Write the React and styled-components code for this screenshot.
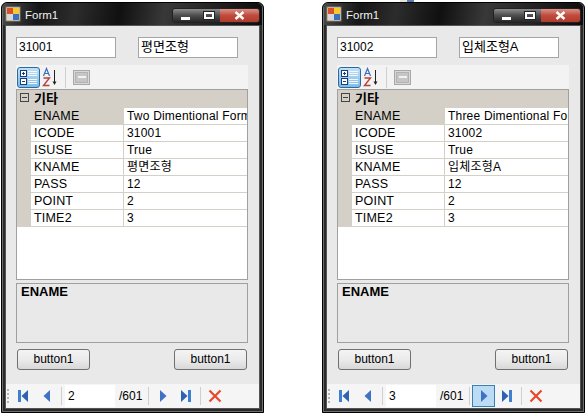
import React from "react";
import styled, { createGlobalStyle } from "styled-components";

const GlobalStyle = createGlobalStyle`
  html, body {
    margin: 0;
    background: #ffffff;
    font-family: "Liberation Sans", "Noto Sans CJK KR", sans-serif;
  }
`;

const forms = [
  {
    code: "31001",
    kname: "평면조형",
    ename: "Two Dimentional Form",
    page: "2",
    nextActive: false,
  },
  {
    code: "31002",
    kname: "입체조형A",
    ename: "Three Dimentional Form",
    page: "3",
    nextActive: true,
  },
];

const FormIcon = () => (
  <svg width="16" height="16" viewBox="0 0 16 16">
    <rect x="1" y="1" width="14" height="14" fill="#f4f0e0" stroke="#8a7f60" />
    <rect x="2" y="2" width="6" height="6" fill="#d8502c" />
    <rect x="8" y="2" width="6" height="6" fill="#f6c92e" />
    <rect x="2" y="8" width="6" height="6" fill="#d8d8d8" />
    <rect x="8" y="8" width="6" height="6" fill="#3b6fc4" />
  </svg>
);

const CategorizedIcon = () => (
  <svg width="21" height="19" viewBox="0 0 21 19">
    <rect x="2.5" y="2.5" width="6" height="6" fill="#fff" stroke="#1a3f78" />
    <path d="M4 5.5h3M5.5 4v3" stroke="#1a3f78" />
    <rect x="2.5" y="10.5" width="6" height="6" fill="#fff" stroke="#1a3f78" />
    <path d="M4 13.5h3" stroke="#1a3f78" />
    <path d="M10 3.5h9M10 5.5h9M10 7.5h9M10 11.5h9M10 13.5h9M10 15.5h9" stroke="#f4f8fc" />
  </svg>
);

const SortIcon = () => (
  <svg width="20" height="20" viewBox="0 0 20 20">
    <path d="M1.5 9 4.5 1.5 7.5 9M2.6 6.5h3.8" fill="none" stroke="#3a6cc0" strokeWidth="1.2" />
    <path d="M1.5 11h6L1.5 18.5h6" fill="none" stroke="#b5423a" strokeWidth="1.4" />
    <path d="M12.5 3v13" stroke="#222" />
    <path d="M10.5 14.5h4L12.5 18z" fill="#222" />
  </svg>
);

const PagesIcon = () => (
  <svg width="17" height="15" viewBox="0 0 17 15">
    <rect x="0.5" y="0.5" width="16" height="14" fill="#d8d8d8" stroke="#a8a8a8" />
    <rect x="2.5" y="2.5" width="12" height="10" fill="#c6c6c6" stroke="#b2b2b2" />
    <path d="M5 7h8" stroke="#f2f2f2" strokeWidth="2" />
  </svg>
);

const NavIcon = ({ kind }) => {
  const paths = {
    first: (
      <>
        <rect x="2" y="2" width="3" height="12" fill="#3f7fd0" />
        <path d="M12 2v12L5.5 8z" fill="#2f62b0" />
      </>
    ),
    prev: <path d="M11 2v12L4.5 8z" fill="#3f72c4" />,
    next: <path d="M5 2v12l6.5-6z" fill="#3f72c4" />,
    last: (
      <>
        <path d="M3 2v12l6.5-6z" fill="#2f62b0" />
        <rect x="10" y="2" width="3" height="12" fill="#3f7fd0" />
      </>
    ),
    del: <path d="M2.5 2.5 13.5 13.5M13.5 2.5 2.5 13.5" stroke="#e8482c" strokeWidth="2.2" />,
  };
  return (
    <svg width="16" height="16" viewBox="0 0 16 16">
      {paths[kind]}
    </svg>
  );
};

const Page = styled.div`
  display: flex;
  gap: 58px;
  padding: 2px 0 0 1px;
  width: 588px;
  height: 418px;
  box-sizing: border-box;
  overflow: hidden;
  position: relative;
`;

const Stray = styled.div`
  position: absolute;
  top: 0;
  left: 400px;
  width: 14px;
  height: 2px;
  background: linear-gradient(90deg, #e8e4d8 0 50%, #5b7fb8 50%);
`;

const Window = styled.div`
  width: 263px;
  height: 411px;
  box-sizing: border-box;
  border: 1px solid #000;
  border-radius: 6px 6px 0 0;
  background: #2a2a2a;
  display: flex;
  flex-direction: column;
  padding: 0 3px 3px;
  box-shadow: inset 0 0 0 1px #6e6e6e;
`;

const TitleBar = styled.div`
  height: 22px;
  flex: none;
  display: flex;
  align-items: center;
  gap: 4px;
  padding-left: 2px;
  margin: 0 -2px;
  border-radius: 5px 5px 0 0;
  background: linear-gradient(100deg, #4a4a4a 0%, #161616 14%, #2c2c2c 28%, #101010 45%, #383838 62%, #0c0c0c 100%);
`;

const TitleText = styled.span`
  flex: 1;
  color: #f0f0f0;
  font-size: 11.5px;
  padding-top: 1px;
`;

const Controls = styled.div`
  display: flex;
  height: 13px;
  margin-right: 2px;
  margin-top: 3px;
  border: 1px solid #222;
  border-radius: 3px;
  overflow: hidden;
`;

const Control = styled.div`
  width: ${(p) => p.$w}px;
  display: flex;
  align-items: center;
  justify-content: center;
  background: ${(p) =>
    p.$close
      ? "linear-gradient(#dd9086, #bf4b3c 50%, #b23a2c)"
      : "linear-gradient(#8c8c8c, #4d4d4d 50%, #262626)"};
`;

const MinGlyph = styled.div`
  width: 9px;
  height: 3px;
  margin-top: 5px;
  background: #fff;
`;

const MaxGlyph = styled.div`
  width: 6px;
  height: 3px;
  border: 2px solid #fff;
  box-shadow: 0 0 0 1px #222;
`;

const CloseGlyph = () => (
  <svg width="11" height="9" viewBox="0 0 11 9">
    <path d="M1.5 1 9.5 8M9.5 1 1.5 8" stroke="#fff" strokeWidth="2.4" />
  </svg>
);

const Client = styled.div`
  flex: 1;
  display: flex;
  flex-direction: column;
  background: #e9e9e9;
  border: 1px solid #555;
  padding-top: 11px;
  min-height: 0;
`;

const FieldRow = styled.div`
  display: flex;
  gap: 22px;
  padding-left: 10px;
`;

const Field = styled.div`
  width: 100px;
  height: 21px;
  box-sizing: border-box;
  border: 1px solid #a5a5a5;
  background: #fff;
  font-size: ${(p) => (p.$hangul ? "13px" : "12px")};
  line-height: 18px;
  padding-left: 2px;
  color: #000;
  white-space: nowrap;
`;

const PropTools = styled.div`
  display: flex;
  align-items: center;
  height: 24px;
  margin: 7px 11px 0 10px;
  background: #f3f3f3;
  padding-left: 1px;
`;

const ToolButton = styled.div`
  width: 23px;
  height: 21px;
  display: flex;
  align-items: center;
  justify-content: center;
  border-radius: 3px;
  ${(p) =>
    p.$active &&
    `border: 1px solid #2d6a9c;
     background: linear-gradient(#bfe0f7, #7fbce8);
     box-sizing: border-box;`}
`;

const ToolSep = styled.div`
  width: 1px;
  height: 21px;
  margin: 0 4px 0 2px;
  background: #cfcfcf;
`;

const Grid = styled.div`
  height: 191px;
  box-sizing: border-box;
  margin: 0 11px 0 10px;
  border: 1px solid #a0a0a0;
  background: #fff;
  font-size: 12px;
`;

const GroupRow = styled.div`
  height: 18px;
  box-sizing: border-box;
  padding: 0 0 3px 3px;
  display: flex;
  align-items: center;
  gap: 5px;
  background: #d4d0c8;
  font-weight: 700;
  font-size: 13px;
`;

const Expander = styled.div`
  width: 9px;
  height: 9px;
  box-sizing: border-box;
  border: 1px solid #444;
  position: relative;
  &::after {
    content: "";
    position: absolute;
    left: 1px;
    right: 1px;
    top: 3px;
    height: 1px;
    background: #444;
  }
`;

const Row = styled.div`
  display: grid;
  grid-template-columns: 14px 93px 1fr;
  height: 17px;
  box-sizing: border-box;
  border-bottom: 1px solid #d4d0c8;
  line-height: 16px;
`;

const Gutter = styled.div`
  background: #d4d0c8;
`;

const Label = styled.div`
  padding-left: 3px;
  font-size: 12.5px;
  letter-spacing: 0.2px;
  background: ${(p) => (p.$selected ? "#d4d0c8" : "#fff")};
  border-right: 1px solid #d4d0c8;
`;

const Value = styled.div`
  padding-left: 3px;
  letter-spacing: 0.2px;
  white-space: nowrap;
  overflow: hidden;
`;

const HelpBox = styled.div`
  height: 60px;
  box-sizing: border-box;
  margin: 3px 11px 0 10px;
  border: 1px solid #a0a0a0;
  background: #e9e9e9;
  padding: 0 4px;
  font-size: 13px;
  font-weight: 700;
`;

const Buttons = styled.div`
  display: flex;
  justify-content: space-between;
  margin: 6px 12px 0 11px;
`;

const ActionButton = styled.div`
  width: 73px;
  height: 21px;
  box-sizing: border-box;
  border: 1px solid #707070;
  border-radius: 3px;
  background: linear-gradient(#f4f4f4, #ebebeb 50%, #d8d8d8);
  text-align: center;
  font-size: 12px;
  line-height: 18px;
`;

const Navigator = styled.div`
  margin-top: auto;
  height: 24px;
  display: flex;
  align-items: center;
  background: #f5f5f5;
  font-size: 12px;
`;

const Grip = styled.div`
  width: 2px;
  height: 14px;
  margin: 0 3px 0 1px;
  background: repeating-linear-gradient(#b5b5b5 0 2px, transparent 2px 4px);
`;

const NavButton = styled.div`
  width: 23px;
  height: 22px;
  box-sizing: border-box;
  display: flex;
  align-items: center;
  justify-content: center;
  ${(p) => p.$active && "border: 1px solid #3c7fb1; background: #bcdcf6;"}
`;

const NavSep = styled.div`
  width: 1px;
  height: 18px;
  margin: 0 ${(p) => p.$right}px 0 3px;
  background: #cfcfcf;
`;

const PageBox = styled.div`
  width: 50px;
  height: 22px;
  background: #fff;
  line-height: 22px;
  padding-left: 3px;
  box-sizing: border-box;
`;

const Total = styled.span`
  margin-left: 4px;
  width: 26px;
`;

const PropertyRows = ({ form }) => {
  const rows = [
    ["ENAME", form.ename],
    ["ICODE", form.code],
    ["ISUSE", "True"],
    ["KNAME", form.kname],
    ["PASS", "12"],
    ["POINT", "2"],
    ["TIME2", "3"],
  ];
  return rows.map(([name, value], i) => (
    <Row key={name}>
      <Gutter />
      <Label $selected={i === 0}>{name}</Label>
      <Value>{value}</Value>
    </Row>
  ));
};

const FormWindow = ({ form }) => (
  <Window>
    <TitleBar>
      <FormIcon />
      <TitleText>Form1</TitleText>
      <Controls>
        <Control $w={24}>
          <MinGlyph />
        </Control>
        <Control $w={23}>
          <MaxGlyph />
        </Control>
        <Control $w={39} $close>
          <CloseGlyph />
        </Control>
      </Controls>
    </TitleBar>
    <Client>
      <FieldRow>
        <Field>{form.code}</Field>
        <Field $hangul>{form.kname}</Field>
      </FieldRow>
      <PropTools>
        <ToolButton $active>
          <CategorizedIcon />
        </ToolButton>
        <ToolButton>
          <SortIcon />
        </ToolButton>
        <ToolSep />
        <ToolButton>
          <PagesIcon />
        </ToolButton>
      </PropTools>
      <Grid>
        <GroupRow>
          <Expander />
          기타
        </GroupRow>
        <PropertyRows form={form} />
      </Grid>
      <HelpBox>ENAME</HelpBox>
      <Buttons>
        <ActionButton>button1</ActionButton>
        <ActionButton>button1</ActionButton>
      </Buttons>
      <Navigator>
        <Grip />
        <NavButton>
          <NavIcon kind="first" />
        </NavButton>
        <NavButton>
          <NavIcon kind="prev" />
        </NavButton>
        <NavSep $right={3} />
        <PageBox>{form.page}</PageBox>
        <Total>/601</Total>
        <NavSep $right={2} />
        <NavButton $active={form.nextActive}>
          <NavIcon kind="next" />
        </NavButton>
        <NavButton>
          <NavIcon kind="last" />
        </NavButton>
        <NavSep $right={2} />
        <NavButton>
          <NavIcon kind="del" />
        </NavButton>
      </Navigator>
    </Client>
  </Window>
);

export default function App() {
  return (
    <>
      <GlobalStyle />
      <Page>
        <Stray />
        {forms.map((form) => (
          <FormWindow key={form.code} form={form} />
        ))}
      </Page>
    </>
  );
}
